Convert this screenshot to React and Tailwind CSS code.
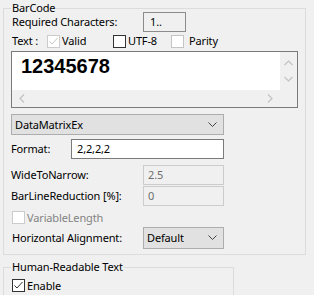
import React from 'react';

const Check = ({ checked = false, tone = 'normal' }) => {
  const box =
    tone === 'disabled'
      ? 'border-[#cccccc] bg-[#ffffff]'
      : tone === 'light'
      ? 'border-[#c4c4c4] bg-white'
      : 'border-[#333333] bg-white';
  const mark = tone === 'disabled' ? '#c4c4c4' : '#333333';
  return (
    <span className={`w-[13px] h-[13px] border ${box} flex items-center justify-center shrink-0`}>
      {checked && (
        <svg width="11" height="11" viewBox="0 0 11 11">
          <polyline points="1.5,5.5 4,8 9.5,2" fill="none" stroke={mark} strokeWidth="1" />
        </svg>
      )}
    </span>
  );
};

const Chevron = () => (
  <svg width="9" height="6" viewBox="0 0 9 6" className="mr-[6px]">
    <polyline points="0.5,0.5 4.5,4.5 8.5,0.5" fill="none" stroke="#444" strokeWidth="1" />
  </svg>
);

const Combo = ({ value, className }) => (
  <div className={`flex items-center justify-between border border-[#adadad] bg-[#e1e1e1] pl-[3px] ${className}`}>
    <span>{value}</span>
    <Chevron />
  </div>
);

const App = () => {
  return (
    <div className="w-[314px] h-[295px] overflow-hidden bg-[#f0f0f0] text-[11px] tracking-[-0.15px] leading-[14px] text-black font-['Noto_Sans',sans-serif]">
      <fieldset className="mt-[2px] ml-[3px] w-[303px] h-[253px] border border-[#dcdcdc] pl-[7px]">
        <legend className="px-px leading-[12px]">BarCode</legend>

        <div className="-mt-[2px] h-[20px] flex items-center">
          <span className="w-[132px] pl-px">Required Characters:</span>
          <div className="w-[43px] h-[20px] border border-[#8c8c8c] bg-[#f0f0f0] pl-[6px] flex items-center">1..</div>
        </div>

        <div className="mt-[2px] h-[14px] flex items-center">
          <span className="w-[36px] pl-px">Text :</span>
          <span className="w-[66px] flex items-center gap-[2px]">
            <Check checked tone="disabled" />
            <span>Valid</span>
          </span>
          <span className="w-[58px] flex items-center gap-[2px]">
            <Check />
            <span>UTF-8</span>
          </span>
          <span className="flex items-center gap-[5px]">
            <Check tone="light" />
            <span>Parity</span>
          </span>
        </div>

        <div className="mt-[3px] w-[287px] h-[57px] border border-[#7a7a7a] bg-white flex">
          <div className="flex-1 flex flex-col">
            <div className="flex-1 pl-[9px] pt-[2px] font-['Liberation_Sans',Arial,sans-serif] font-bold text-[20px] leading-[24px] tracking-normal">
              12345678
            </div>
            <div className="h-[17px] bg-[#f0f0f0] flex items-center justify-between px-[7px]">
              <svg width="6" height="9" viewBox="0 0 6 9">
                <polyline points="5,0.5 1,4.5 5,8.5" fill="none" stroke="#c2c2c2" strokeWidth="1.2" />
              </svg>
              <svg width="6" height="9" viewBox="0 0 6 9">
                <polyline points="1,0.5 5,4.5 1,8.5" fill="none" stroke="#c2c2c2" strokeWidth="1.2" />
              </svg>
            </div>
          </div>
          <div className="w-[17px] bg-[#f0f0f0] flex flex-col">
            <div className="h-[38px] flex flex-col items-center justify-between py-[8px]">
              <svg width="9" height="6" viewBox="0 0 9 6">
                <polyline points="0.5,5 4.5,1 8.5,5" fill="none" stroke="#c2c2c2" strokeWidth="1.2" />
              </svg>
              <svg width="9" height="6" viewBox="0 0 9 6">
                <polyline points="0.5,1 4.5,5 8.5,1" fill="none" stroke="#c2c2c2" strokeWidth="1.2" />
              </svg>
            </div>
          </div>
        </div>

        <Combo value="DataMatrixEx" className="mt-[6px] w-[213px] h-[21px]" />

        <div className="mt-[4px] h-[20px] flex items-center">
          <span className="w-[60px]">Format:</span>
          <div className="w-[153px] h-[20px] border border-[#7a7a7a] bg-white pl-[5px] flex items-center">2,2,2,2</div>
        </div>

        <div className="mt-[6px] h-[20px] flex items-center">
          <span className="w-[132px]">WideToNarrow:</span>
          <div className="w-[81px] h-[20px] border border-[#cccccc] bg-[#f0f0f0] pl-[4px] flex items-center text-[#6d6d6d]">2.5</div>
        </div>

        <div className="mt-px h-[20px] flex items-center">
          <span className="w-[132px]">BarLineReduction [%]:</span>
          <div className="w-[81px] h-[20px] border border-[#cccccc] bg-[#f0f0f0] pl-[4px] flex items-center text-[#6d6d6d]">0</div>
        </div>

        <div className="mt-[5px] h-[13px] ml-px flex items-center gap-[2px] text-[#838383]">
          <Check tone="disabled" />
          <span>VariableLength</span>
        </div>

        <div className="mt-[3px] h-[22px] flex items-center">
          <span className="w-[132px] pl-px">Horizontal Alignment:</span>
          <Combo value="Default" className="w-[81px] h-[22px]" />
        </div>
      </fieldset>

      <fieldset className="mt-[6px] ml-[3px] w-[231px] h-[40px] border border-[#dcdcdc] pl-[7px]">
        <legend className="px-px leading-[12px]">Human-Readable Text</legend>
        <div className="mt-[6px] ml-px h-[13px] flex items-center gap-[2px]">
          <Check checked />
          <span>Enable</span>
        </div>
      </fieldset>
    </div>
  );
};

export default App;
